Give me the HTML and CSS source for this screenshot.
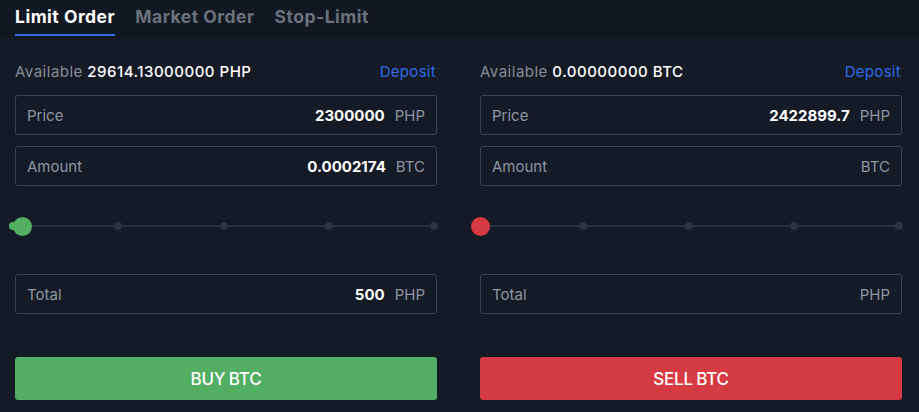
FILE: index.html
```html
<!DOCTYPE html>
<html lang="en">
<head>
  <meta charset="UTF-8">
  <title>Order Form</title>
  <link rel="stylesheet" href="styles.css">
</head>
<body>

<!-- tabs -->
<div class="tabs">
  <div class="tab active">Limit Order</div>
  <div class="tab">Market Order</div>
  <div class="tab">Stop-Limit</div>
</div>

<div class="forms">
  <!-- buy side -->
  <div class="side">
    <div class="avail">
      <span><span class="muted">Available</span> 29614.13000000 PHP</span>
      <a class="deposit">Deposit</a>
    </div>
    <div class="field"><span class="label">Price</span><span class="val">2300000</span><span class="unit">PHP</span></div>
    <div class="field"><span class="label">Amount</span><span class="val">0.0002174</span><span class="unit">BTC</span></div>
    <div class="slider">
      <div class="track"></div>
      <span class="dot"></span><span class="dot"></span><span class="dot"></span><span class="dot"></span><span class="dot"></span>
      <div class="fill buy"></div>
      <div class="knob buy"></div>
    </div>
    <div class="field"><span class="label">Total</span><span class="val">500</span><span class="unit">PHP</span></div>
    <button class="btn buy">BUY BTC</button>
  </div>

  <!-- sell side -->
  <div class="side">
    <div class="avail">
      <span><span class="muted">Available</span> 0.00000000 BTC</span>
      <a class="deposit">Deposit</a>
    </div>
    <div class="field"><span class="label">Price</span><span class="val">2422899.7</span><span class="unit">PHP</span></div>
    <div class="field"><span class="label">Amount</span><span class="val"></span><span class="unit">BTC</span></div>
    <div class="slider">
      <div class="track"></div>
      <span class="dot"></span><span class="dot"></span><span class="dot"></span><span class="dot"></span><span class="dot"></span>
      <div class="knob sell"></div>
    </div>
    <div class="field"><span class="label">Total</span><span class="val"></span><span class="unit">PHP</span></div>
    <button class="btn sell">SELL BTC</button>
  </div>
</div>

</body>
</html>
```

FILE: styles.css
```css
body {
  margin: 0;
  background: #151b26;
  font-family: Inter, "Noto Sans", sans-serif;
  color: #fff;
  height: 412px;
  overflow: hidden;
}
/* tabs */
.tabs {
  display: flex;
  gap: 20px;
  height: 38px;
  padding-left: 15px;
  background: #121822;
}
.tab {
  font-size: 17.5px;
  font-weight: 700;
  letter-spacing: 0.5px;
  color: #6b727c;
  line-height: 34px;
  height: 36px;
  box-sizing: border-box;
}
.tab.active {
  color: #fff;
  border-bottom: 2px solid #2f6fe6;
}
/* two forms */
.forms {
  display: flex;
  gap: 43px;
  padding: 0 17px 0 15px;
}
.side {
  flex: 1;
  display: flex;
  flex-direction: column;
}
.avail {
  display: flex;
  justify-content: space-between;
  margin-top: 24px;
  margin-bottom: 13px;
  font-size: 15px;
  letter-spacing: 0.5px;
  line-height: 20px;
  font-weight: 500;
}
.muted {
  color: #858c96;
  font-weight: 400;
}
.deposit {
  color: #2d6be8;
  font-weight: 400;
  letter-spacing: 0.3px;
  margin-right: 1px;
}
.field {
  display: flex;
  align-items: center;
  height: 40px;
  box-sizing: border-box;
  border: 1px solid #3a4350;
  border-radius: 3px;
  padding: 0 11px;
  margin-bottom: 11px;
  font-size: 15px;
}
.label {
  flex: 1;
  color: #8d96a2;
}
.val {
  font-weight: 700;
  margin-right: 10px;
}
.unit {
  color: #8d96a2;
}
/* percentage slider: 0% point sits slightly left of the panel edge */
.slider {
  position: relative;
  display: flex;
  justify-content: space-between;
  align-items: center;
  height: 20px;
  margin: 19px -1px 38px -6px;
}
.track {
  position: absolute;
  left: 4px;
  right: 4px;
  top: 9px;
  height: 2px;
  background: #28303b;
}
.dot {
  position: relative;
  width: 8px;
  height: 8px;
  border-radius: 50%;
  background: #2b3440;
}
.fill {
  position: absolute;
  left: 0;
  top: 6px;
  width: 12px;
  height: 8px;
  border-radius: 4px;
}
.fill.buy { background: #52ae63; }
.knob {
  position: absolute;
  top: 1px;
  width: 19px;
  height: 19px;
  border-radius: 50%;
}
.knob.buy { left: 4px; background: #52ae63; }
.knob.sell { left: -3px; background: #d63a43; }
.btn {
  height: 43px;
  border: none;
  border-radius: 3px;
  color: #fff;
  font-family: Inter, "Noto Sans", sans-serif;
  font-size: 17px;
  font-weight: 500;
  letter-spacing: -0.2px;
  word-spacing: -1px;
  margin-top: 32px;
}
.btn.buy { background: #52ae63; }
.btn.sell { background: #d63a43; }
```
